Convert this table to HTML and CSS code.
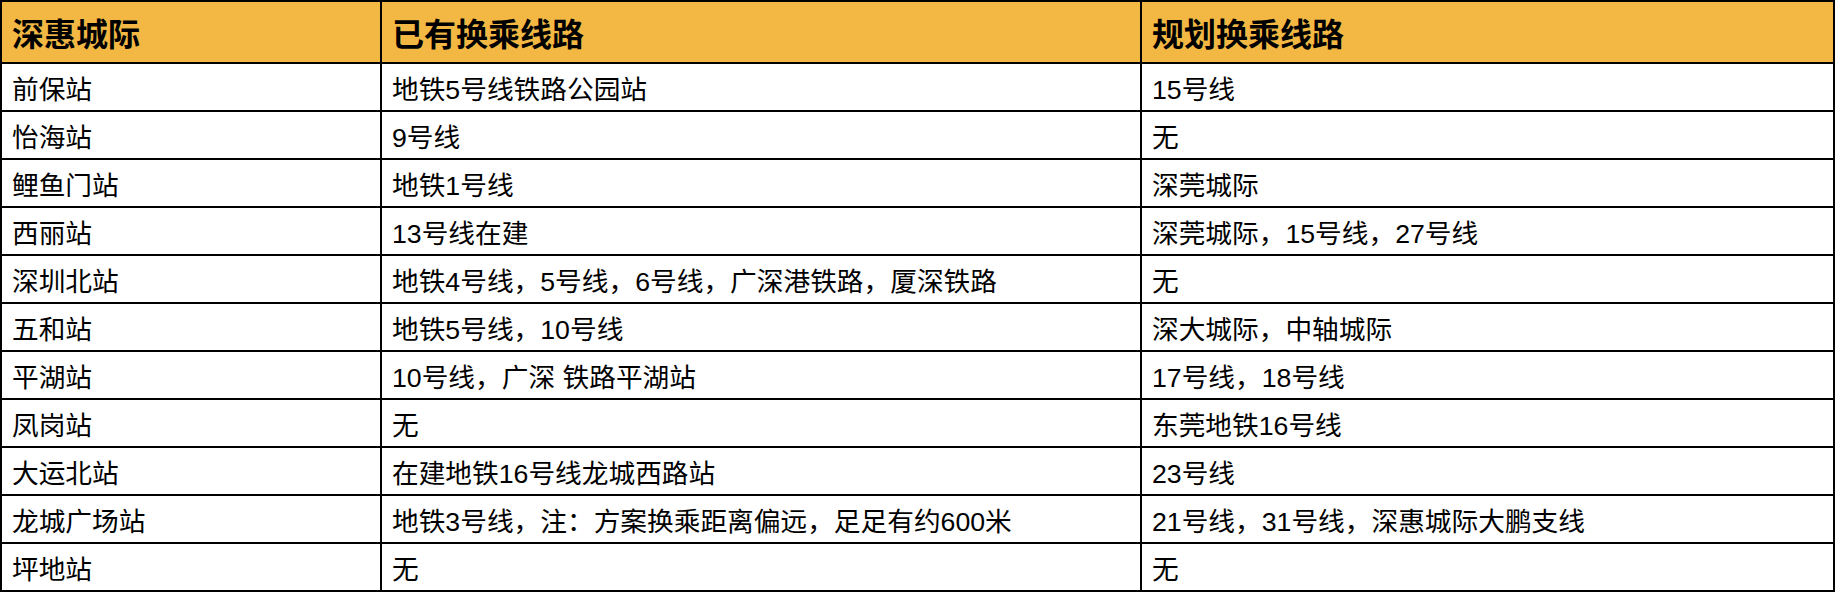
FILE: index.html
```html
<!DOCTYPE html>
<html lang="zh-CN">
<head>
<meta charset="utf-8">
<title>深惠城际换乘</title>
<link rel="stylesheet" href="styles.css">
</head>
<body>
<table class="grid">
  <colgroup>
    <col class="c1">
    <col class="c2">
    <col class="c3">
  </colgroup>
  <thead>
    <tr><th>深惠城际</th><th>已有换乘线路</th><th>规划换乘线路</th></tr>
  </thead>
  <tbody>
    <tr><td>前保站</td><td>地铁5号线铁路公园站</td><td>15号线</td></tr>
    <tr><td>怡海站</td><td>9号线</td><td>无</td></tr>
    <tr><td>鲤鱼门站</td><td>地铁1号线</td><td>深莞城际</td></tr>
    <tr><td>西丽站</td><td>13号线在建</td><td>深莞城际，15号线，27号线</td></tr>
    <tr><td>深圳北站</td><td>地铁4号线，5号线，6号线，广深港铁路，厦深铁路</td><td>无</td></tr>
    <tr><td>五和站</td><td>地铁5号线，10号线</td><td>深大城际，中轴城际</td></tr>
    <tr><td>平湖站</td><td>10号线，广深 铁路平湖站</td><td>17号线，18号线</td></tr>
    <tr><td>凤岗站</td><td>无</td><td>东莞地铁16号线</td></tr>
    <tr><td>大运北站</td><td>在建地铁16号线龙城西路站</td><td>23号线</td></tr>
    <tr><td>龙城广场站</td><td>地铁3号线，注：方案换乘距离偏远，足足有约600米</td><td>21号线，31号线，深惠城际大鹏支线</td></tr>
    <tr><td>坪地站</td><td>无</td><td>无</td></tr>
  </tbody>
</table>
</body>
</html>
```
FILE: styles.css
```css
html, body {
  margin: 0;
  padding: 0;
  background: #ffffff;
}

body {
  font-family: "Liberation Sans", "Noto Sans CJK SC", sans-serif;
  color: #000000;
}

.grid {
  border-collapse: separate;
  border-spacing: 0;
  table-layout: fixed;
  width: 1835px;
  border-top: 2px solid #000;
  border-left: 2px solid #000;
}

.c1 { width: 380px; }
.c2 { width: 760px; }
.c3 { width: 693px; }

.grid th,
.grid td {
  box-sizing: border-box;
  border-right: 2px solid #000;
  border-bottom: 2px solid #000;
  padding: 0 10px;
  text-align: left;
  vertical-align: middle;
  white-space: nowrap;
}

.grid th {
  height: 62px;
  background: #f2b843;
  font-size: 32px;
  font-weight: 700;
}

.grid td {
  height: 48px;
  font-size: 26.7px;
  font-weight: 400;
}
```
